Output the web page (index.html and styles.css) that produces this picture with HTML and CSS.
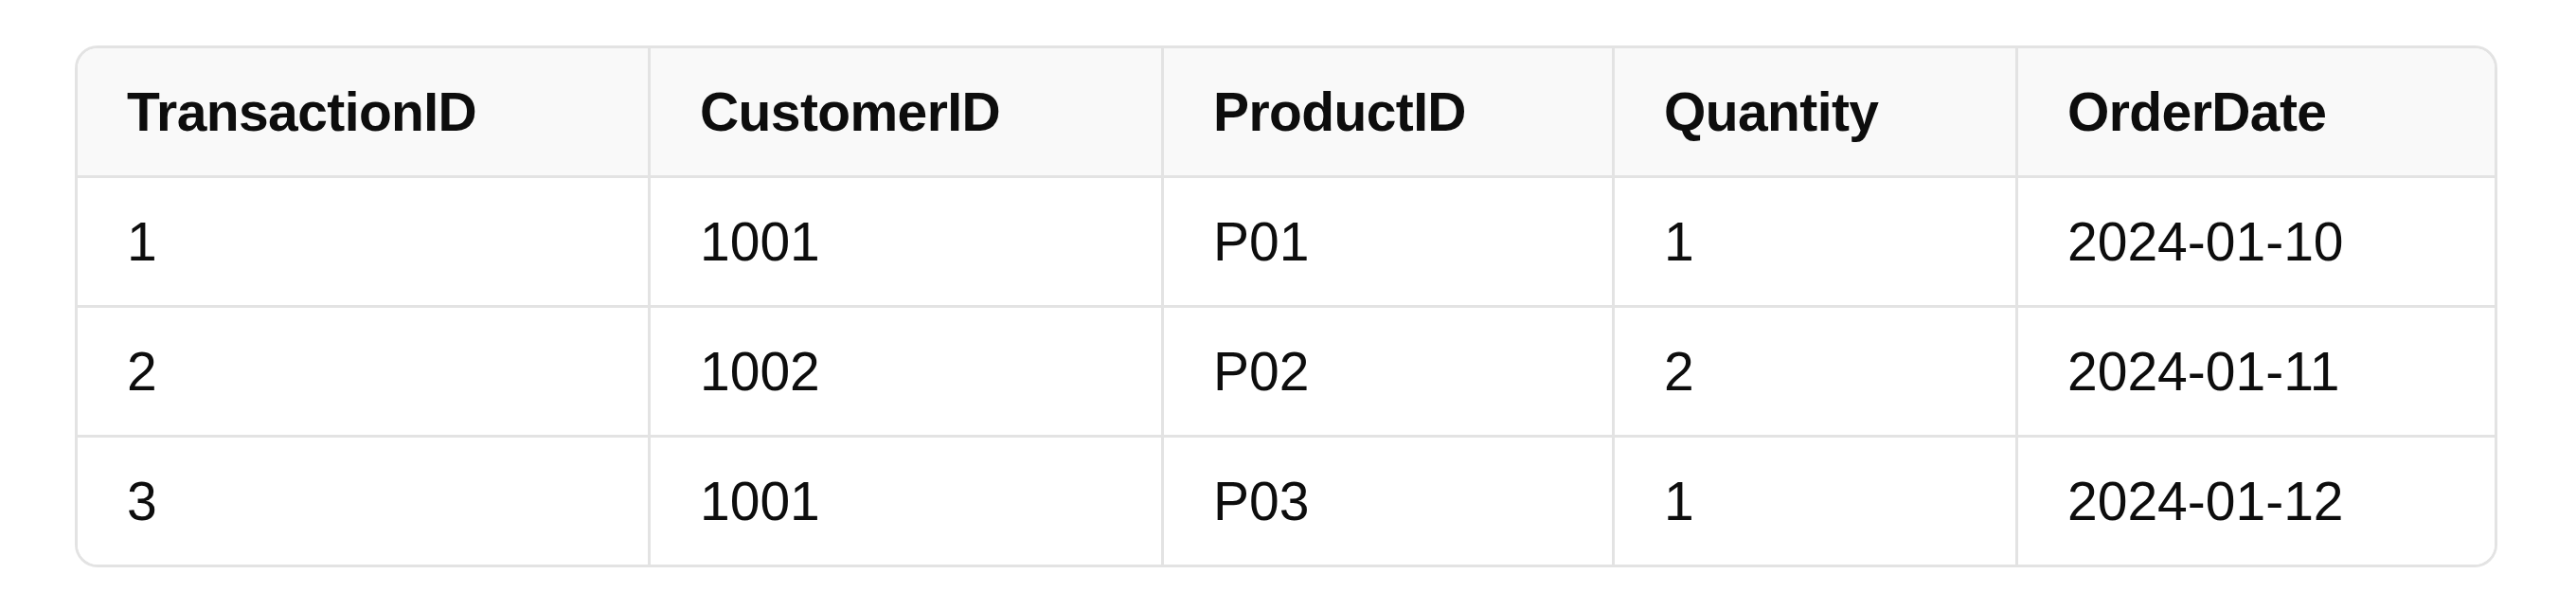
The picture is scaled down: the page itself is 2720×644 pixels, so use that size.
FILE: index.html
```html
<!DOCTYPE html>
<html lang="en">
<head>
<meta charset="utf-8">
<title>Transactions</title>
<link rel="stylesheet" href="styles.css">
</head>
<body>
<div class="table-wrap">
  <div class="grid">
    <div class="cell head">TransactionID</div>
    <div class="cell head">CustomerID</div>
    <div class="cell head">ProductID</div>
    <div class="cell head">Quantity</div>
    <div class="cell head last-col">OrderDate</div>

    <div class="cell">1</div>
    <div class="cell">1001</div>
    <div class="cell">P01</div>
    <div class="cell">1</div>
    <div class="cell last-col">2024-01-10</div>

    <div class="cell">2</div>
    <div class="cell">1002</div>
    <div class="cell">P02</div>
    <div class="cell">2</div>
    <div class="cell last-col">2024-01-11</div>

    <div class="cell last-row">3</div>
    <div class="cell last-row">1001</div>
    <div class="cell last-row">P03</div>
    <div class="cell last-row">1</div>
    <div class="cell last-row last-col">2024-01-12</div>
  </div>
</div>
</body>
</html>
```

FILE: styles.css
```css
html, body {
  margin: 0;
  padding: 0;
  background: #ffffff;
}

body {
  padding: 48px 83px 0 79px;
  font-family: "Liberation Sans", Arial, sans-serif;
  color: #0d0d0d;
}

.table-wrap {
  border: 3px solid #e3e3e3;
  border-radius: 24px;
  overflow: hidden;
}

.grid {
  display: grid;
  grid-template-columns: 605px 542px 476px 426px 1fr;
}

.cell {
  padding: 25px 52px;
  line-height: 84px;
  font-size: 57px;
  font-weight: 400;
  white-space: nowrap;
  border-right: 3px solid #e3e3e3;
  border-bottom: 3px solid #e3e3e3;
  background: #ffffff;
}

.cell.head {
  background: #f9f9f9;
  font-weight: 700;
  letter-spacing: -0.6px;
}

.cell.last-col {
  border-right: none;
}

.cell.last-row {
  border-bottom: none;
}
```
